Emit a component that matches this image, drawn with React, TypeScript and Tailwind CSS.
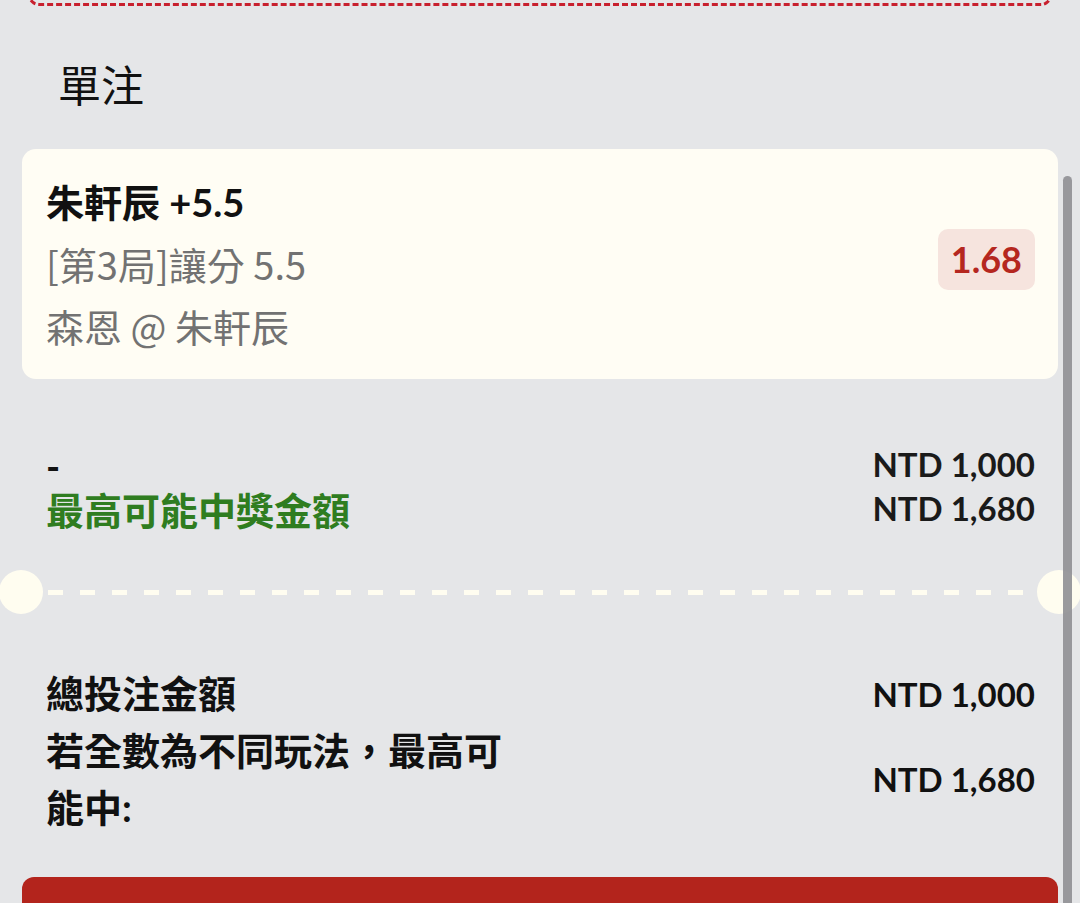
export default function App() {
  return (
    <div className="relative min-h-screen overflow-hidden bg-[#e5e6e8] font-['Lato','Noto_Sans_CJK_TC',sans-serif] text-[#1a1a1a]">
      {/* bottom edge of the previous (dashed) ticket */}
      <div className="mx-[28px] -mt-[16px] h-[22px] rounded-[12px] border-[3px] border-dashed border-[#c8202e]" />

      <h2 className="ml-[58px] mt-[47px] font-['Noto_Sans_CJK_TC',sans-serif] text-[43px] font-normal leading-[60px] text-[#111]">
        單注
      </h2>

      {/* selection card */}
      <div className="mx-[22px] mt-[36px] flex items-center justify-between rounded-[14px] bg-[#fffdf4] pb-[22px] pl-[24px] pr-[23px] pt-[22px]">
        <div className="text-[38px] leading-[62px]">
          <div className="font-bold text-[#111]">朱軒辰 +5.5</div>
          <div className="font-['Noto_Sans_CJK_TC',sans-serif] text-[#727272]">[第3局]讓分 5.5</div>
          <div className="font-['Noto_Sans_CJK_TC',sans-serif] text-[#727272]">森恩 @ 朱軒辰</div>
        </div>
        <div className="-mt-[9px] rounded-[10px] bg-[#f6e4de] px-[13px] text-[36px] font-bold leading-[61px] text-[#b5271f]">
          1.68
        </div>
      </div>

      {/* stake / potential win */}
      <div className="mt-[63px] flex justify-between pl-[46px] pr-[45px]">
        <div className="mt-[2px] text-[38px] font-bold leading-[44px]">
          <div className="text-[#111]">-</div>
          <div className="text-[#2f7d20]">最高可能中獎金額</div>
        </div>
        <div className="text-right text-[33px] font-bold leading-[44px]">
          <div>NTD 1,000</div>
          <div>NTD 1,680</div>
        </div>
      </div>

      {/* ticket perforation */}
      <div className="mt-[38px] flex items-center">
        <div className="-ml-[1px] h-[44px] w-[44px] shrink-0 rounded-full bg-[#fffdf0]" />
        <div className="mx-[5px] h-[5px] flex-1 bg-[repeating-linear-gradient(90deg,#fffdf0_0_15px,transparent_15px_32px)]" />
        <div className="-mr-[1px] h-[44px] w-[44px] shrink-0 rounded-full bg-[#fffdf0]" />
      </div>

      {/* totals */}
      <div className="mt-[51px] pl-[46px] pr-[45px] text-[#111]">
        <div className="flex items-center justify-between">
          <div className="text-[38px] font-bold leading-[57px]">總投注金額</div>
          <div className="text-[33px] font-bold leading-[44px]">NTD 1,000</div>
        </div>
        <div className="flex items-center justify-between">
          <div className="w-[470px] text-[38px] font-bold leading-[57px]">
            若全數為不同玩法，最高可能中:
          </div>
          <div className="text-[33px] font-bold leading-[44px]">NTD 1,680</div>
        </div>
      </div>

      <button className="mx-[22px] mt-[41px] block h-[100px] w-[1036px] rounded-[12px] bg-[#b3241c]" />

      {/* scrollbar */}
      <div className="absolute bottom-0 right-[8px] top-[176px] w-[9px] rounded-t-full bg-[#8f8f93]/90" />
    </div>
  );
}
